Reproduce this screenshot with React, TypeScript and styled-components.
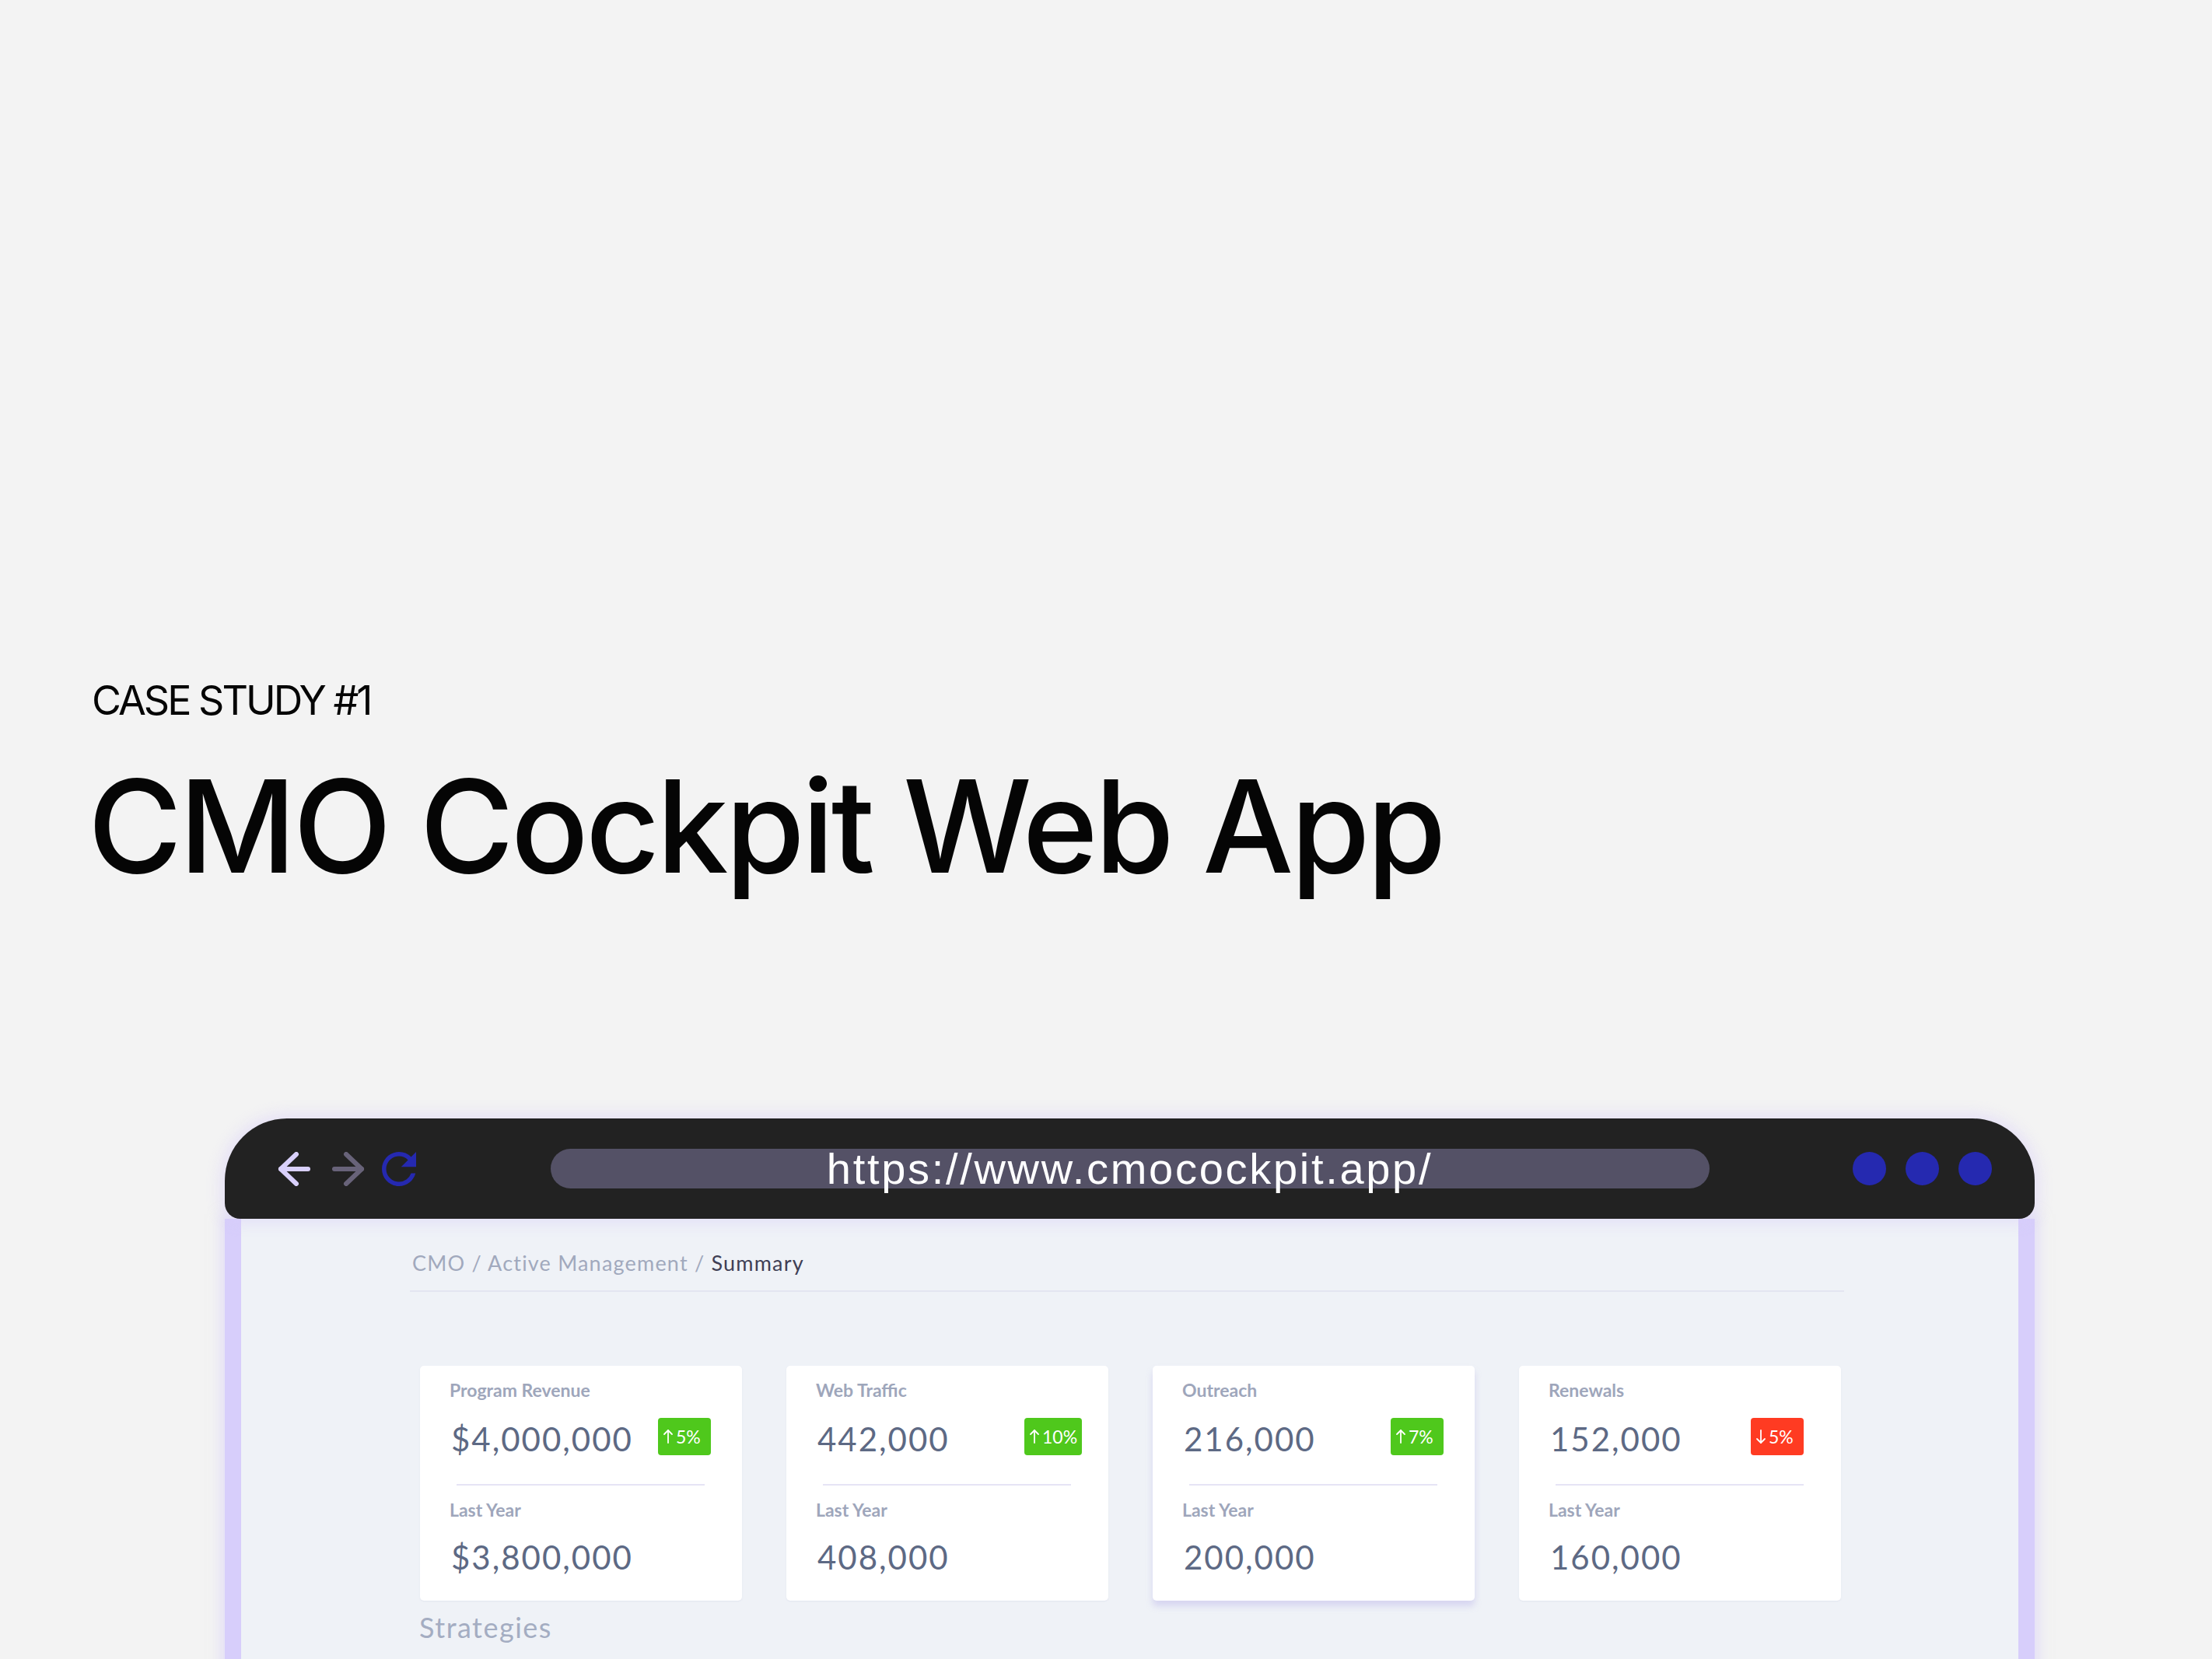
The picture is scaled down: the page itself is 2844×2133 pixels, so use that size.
import React from 'react';
import styled, { createGlobalStyle } from 'styled-components';

const GlobalStyle = createGlobalStyle`
  html, body {
    margin: 0;
    padding: 0;
    background: #f3f3f3;
  }
  body {
    width: 2844px;
    height: 2133px;
    overflow: hidden;
  }
`;

const Page = styled.div`
  display: flex;
  flex-direction: column;
  padding-top: 875px;
`;

const Hero = styled.header`
  padding-left: 118px;
  font-family: Inter, 'Noto Sans', sans-serif;
  color: #050505;
`;

const Eyebrow = styled.div`
  font-size: 52px;
  line-height: 1;
  font-weight: 400;
  letter-spacing: -3px;
`;

const Title = styled.h1`
  margin: 53px 0 0 -5px;
  font-size: 165px;
  line-height: 1;
  font-weight: 500;
  letter-spacing: -3.8px;
`;

const Frame = styled.div`
  margin: 293px 0 0 289px;
  width: 2327px;
  display: flex;
  flex-direction: column;
`;

const Toolbar = styled.div`
  position: relative;
  z-index: 1;
  height: 129px;
  background: #222222;
  border-radius: 80px 80px 20px 20px;
  box-shadow: 0 0 18px 6px rgba(214, 205, 250, 0.45);
  display: grid;
  grid-template-columns: 1fr 1490px 1fr;
  align-items: center;
`;

const NavGroup = styled.div`
  display: flex;
  align-items: center;
  padding-left: 68px;
  gap: 28px;

  svg:last-child {
    margin-left: -6px;
  }
`;

const UrlBar = styled.div`
  height: 51px;
  border-radius: 26px;
  background: #545166;
  display: flex;
  align-items: center;
  justify-content: center;
  font-family: 'Liberation Sans', Arial, sans-serif;
  font-size: 56px;
  line-height: 51px;
  letter-spacing: 2.7px;
  color: #ffffff;
  white-space: nowrap;
`;

const Dots = styled.div`
  display: flex;
  justify-content: flex-end;
  gap: 25px;
  padding-right: 55px;
`;

const Dot = styled.span`
  width: 43px;
  height: 43px;
  border-radius: 50%;
  background: #2529b0;
`;

const Panel = styled.main`
  background: #eff2f7;
  border: solid #d7cefb;
  border-width: 0 21px;
  box-shadow: 0 0 14px 6px rgba(214, 205, 250, 0.5);
  padding: 43px 224px 0 217px;
  height: 566px;
  font-family: Lato, 'Open Sans', sans-serif;
`;

const Breadcrumb = styled.div`
  padding-left: 3px;
  font-size: 27px;
  line-height: 1;
  color: #a1a9bd;
  letter-spacing: 1.2px;

  b {
    font-weight: 400;
    color: #3f3f55;
  }
`;

const Rule = styled.div`
  margin-top: 22px;
  height: 2px;
  background: #e3e5f1;
`;

const Cards = styled.div`
  margin: 95px 4px 0 13px;
  display: grid;
  grid-template-columns: repeat(4, 414px);
  gap: 57px;
`;

const Card = styled.section<{ $raised?: boolean }>`
  height: 302px;
  box-sizing: border-box;
  padding: 20px 0 0 38px;
  background: #ffffff;
  border-radius: 5px;
  box-shadow: ${(p) =>
    p.$raised ? '0 7px 8px rgba(170, 160, 230, 0.35)' : '0 1px 2px rgba(200, 205, 225, 0.35)'};
`;

const Label = styled.div`
  font-size: 23px;
  line-height: 1;
  font-weight: 700;
  color: #9ea6bb;
`;

const ValueRow = styled.div`
  margin-top: 24px;
  display: flex;
  align-items: flex-end;
`;

const Value = styled.div<{ $span?: number }>`
  width: ${(p) => p.$span ?? 266}px;
  margin-left: 2px;
  font-size: 42px;
  line-height: 1;
  font-weight: 400;
  color: #5d6984;
  letter-spacing: 2px;
`;

const Badge = styled.span<{ $down?: boolean }>`
  height: 48px;
  padding: 0 6px;
  min-width: 68px;
  box-sizing: border-box;
  border-radius: 4px;
  background: ${(p) => (p.$down ? '#ff3b22' : '#4fc81c')};
  color: #ffffff;
  display: inline-flex;
  align-items: center;
  gap: 3px;
  font-size: 23px;
  line-height: 1;

  svg {
    width: 14px;
    height: 20px;
  }
`;

const Split = styled.div`
  margin: 37px 48px 0 9px;
  height: 2px;
  background: #e6e4f5;
`;

const SubLabel = styled(Label)`
  margin-top: 20px;
`;

const LastValue = styled(Value)`
  margin-top: 28px;
`;

const Section = styled.h2`
  margin: 16px 0 0 12px;
  font-size: 36px;
  line-height: 1;
  font-weight: 400;
  color: #a4adc2;
  letter-spacing: 1.5px;
`;

const Arrow = ({ dir, color }: { dir: 'left' | 'right'; color: string }) => (
  <svg
    width="42"
    height="44"
    viewBox="0 0 42 44"
    fill="none"
    stroke={color}
    strokeWidth="6"
    strokeLinecap="round"
    strokeLinejoin="round"
    style={dir === 'right' ? { transform: 'scaleX(-1)' } : undefined}
  >
    <path d="M4 22H39" />
    <path d="M24 3L4 22L24 41" />
  </svg>
);

const Reload = () => (
  <svg width="44" height="44" viewBox="4 4 16 16" fill="#2529b0">
    <path d="M17.65 6.35A7.958 7.958 0 0 0 12 4c-4.42 0-7.99 3.58-7.99 8s3.57 8 7.99 8c3.730 0 6.84-2.55 7.73-6h-2.08A5.99 5.99 0 0 1 12 18c-3.31 0-6-2.69-6-6s2.69-6 6-6c1.66 0 3.14.69 4.22 1.78L13 11h7V4l-2.35 2.35z" />
  </svg>
);

const Trend = ({ down }: { down?: boolean }) => (
  <svg viewBox="0 0 14 20" fill="none" stroke="#fff" strokeWidth="1.8" strokeLinecap="round" strokeLinejoin="round">
    {down ? (
      <>
        <path d="M7 2V18" />
        <path d="M2 13L7 18L12 13" />
      </>
    ) : (
      <>
        <path d="M7 18V2" />
        <path d="M2 7L7 2L12 7" />
      </>
    )}
  </svg>
);

type Metric = {
  label: string;
  value: string;
  change: string;
  down?: boolean;
  last: string;
  raised?: boolean;
  span?: number;
};

const metrics: Metric[] = [
  { label: 'Program Revenue', value: '$4,000,000', change: '5%', last: '$3,800,000' },
  { label: 'Web Traffic', value: '442,000', change: '10%', last: '408,000' },
  { label: 'Outreach', value: '216,000', change: '7%', last: '200,000', raised: true },
  { label: 'Renewals', value: '152,000', change: '5%', down: true, last: '160,000', span: 258 },
];

const App = () => (
  <>
    <GlobalStyle />
    <Page>
      <Hero>
        <Eyebrow>CASE STUDY #1</Eyebrow>
        <Title>CMO Cockpit Web App</Title>
      </Hero>

      <Frame>
        <Toolbar>
          <NavGroup>
            <Arrow dir="left" color="#d9d0fb" />
            <Arrow dir="right" color="#686379" />
            <Reload />
          </NavGroup>
          <UrlBar>https://www.cmocockpit.app/</UrlBar>
          <Dots>
            <Dot />
            <Dot />
            <Dot />
          </Dots>
        </Toolbar>

        <Panel>
          <Breadcrumb>
            CMO / Active Management / <b>Summary</b>
          </Breadcrumb>
          <Rule />
          <Cards>
            {metrics.map((m) => (
              <Card key={m.label} $raised={m.raised}>
                <Label>{m.label}</Label>
                <ValueRow>
                  <Value $span={m.span}>{m.value}</Value>
                  <Badge $down={m.down}>
                    <Trend down={m.down} />
                    {m.change}
                  </Badge>
                </ValueRow>
                <Split />
                <SubLabel>Last Year</SubLabel>
                <LastValue>{m.last}</LastValue>
              </Card>
            ))}
          </Cards>
          <Section>Strategies</Section>
        </Panel>
      </Frame>
    </Page>
  </>
);

export default App;
